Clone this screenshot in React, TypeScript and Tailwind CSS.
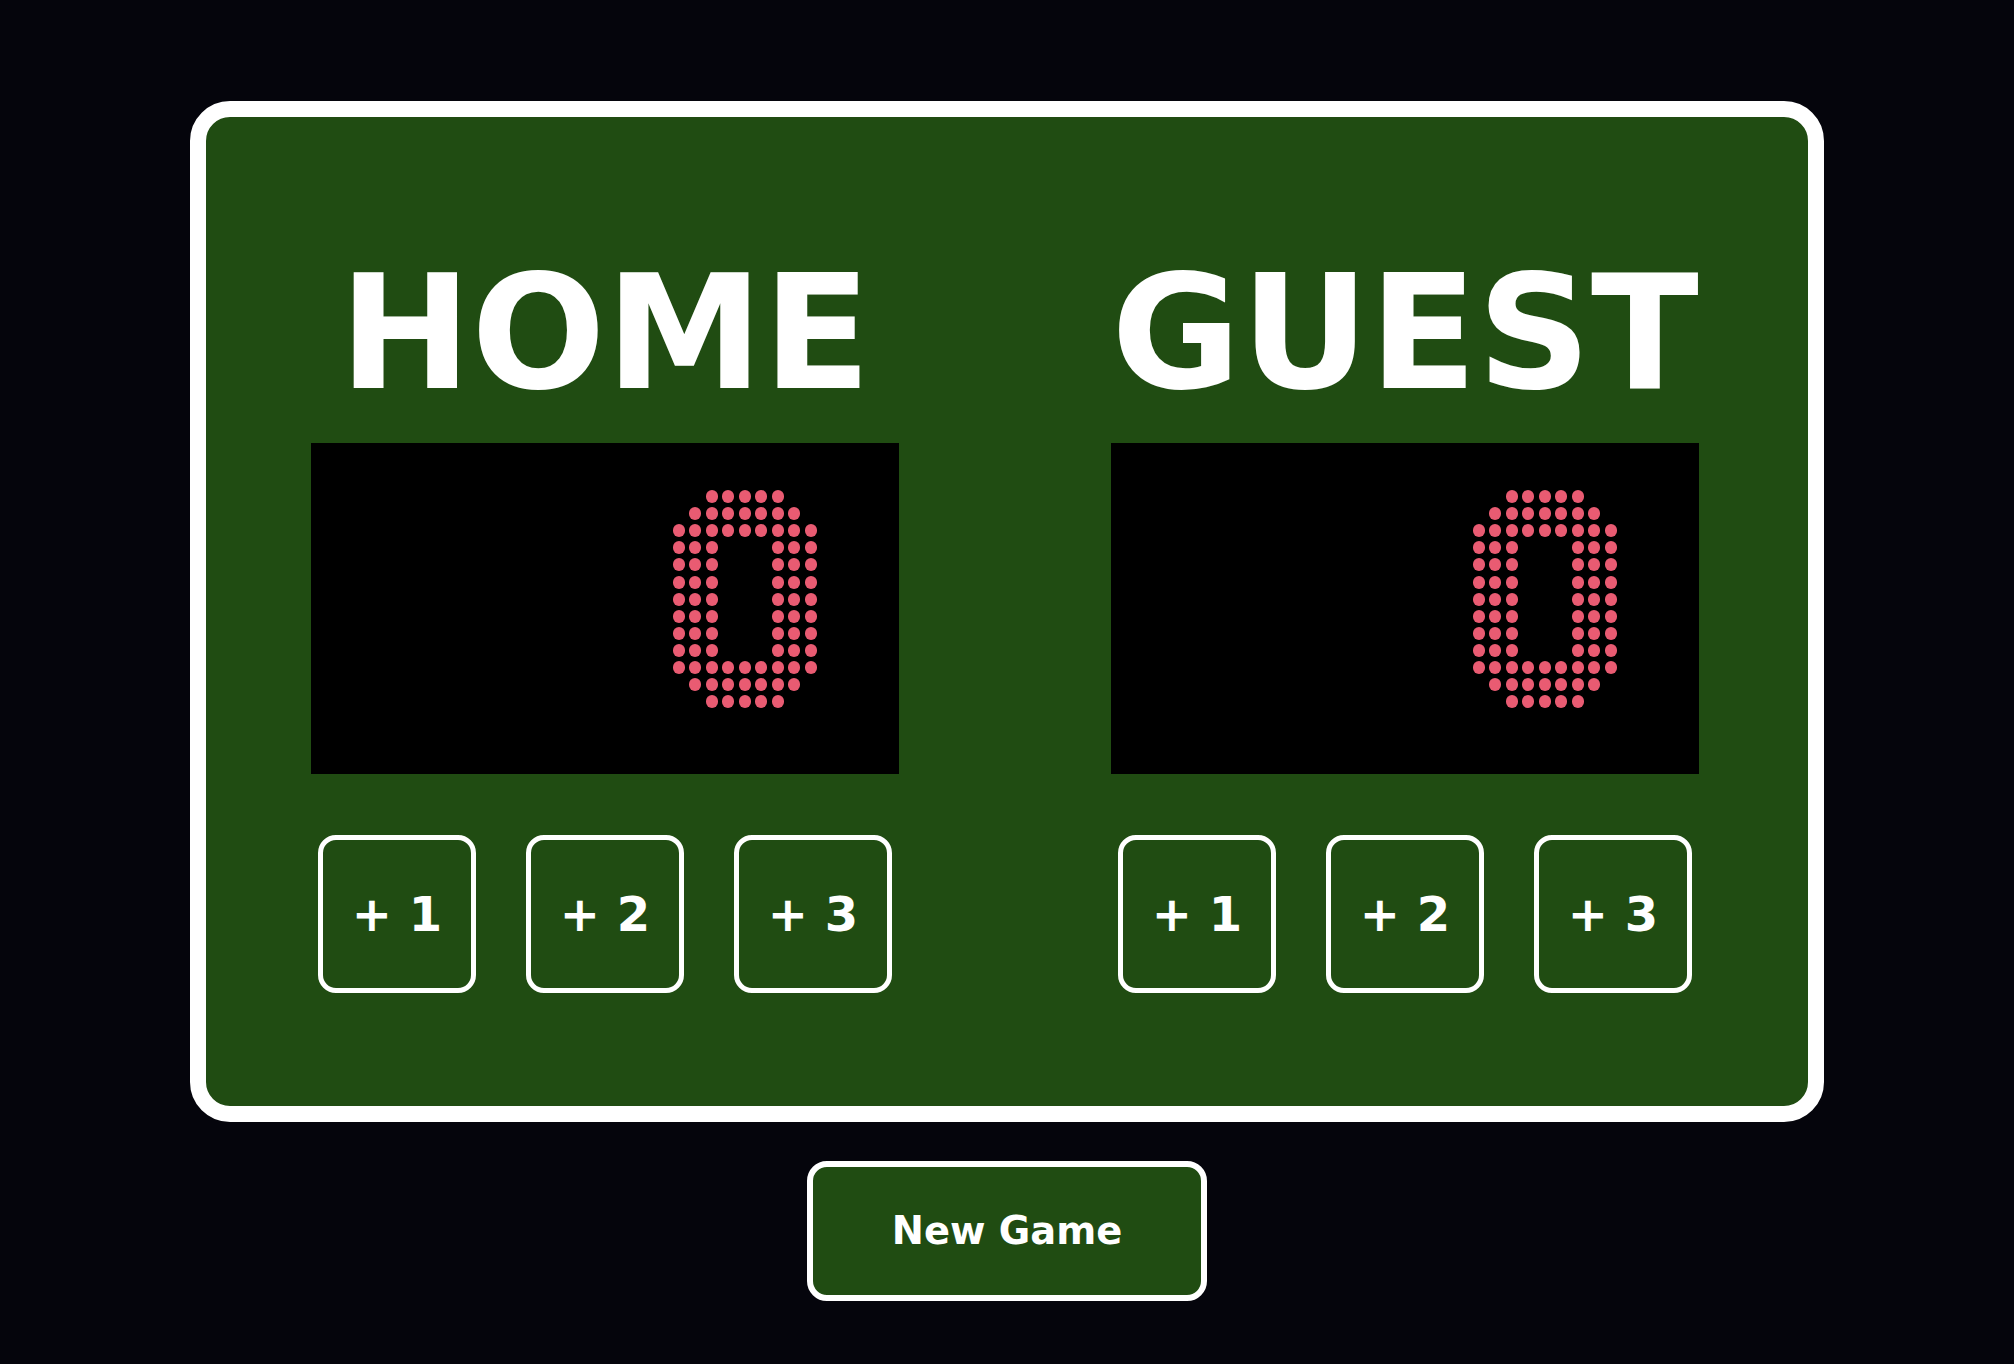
import React, { useState } from "react";

const digitPatterns: Record<string, string[]> = {
  "0": [
    "..#####..",
    ".#######.",
    "#########",
    "###...###",
    "###...###",
    "###...###",
    "###...###",
    "###...###",
    "###...###",
    "###...###",
    "#########",
    ".#######.",
    "..#####..",
  ],
};

function LedDigit({ digit }: { digit: string }) {
  const rows = digitPatterns[digit] ?? digitPatterns["0"];
  return (
    <div className="relative">
      <div
        aria-hidden="true"
        className="grid grid-cols-[repeat(9,16.5px)] grid-rows-[repeat(13,17.1px)]"
      >
        {rows.flatMap((row, r) =>
          row.split("").map((c, i) => (
            <div key={`${r}-${i}`} className="flex items-center justify-center">
              {c === "#" && <div className="w-[12px] h-[13px] rounded-full bg-[#e95b72]" />}
            </div>
          ))
        )}
      </div>
      {/* the real digit, kept as text under the LED dots */}
      <span className="absolute inset-0 flex items-center justify-center text-[190px] leading-[222px] font-bold text-transparent select-none">
        {digit}
      </span>
    </div>
  );
}

function Team({ name, score, onAdd }: { name: string; score: number; onAdd: (n: number) => void }) {
  return (
    <div className="flex flex-col items-center">
      <h2 className="w-full text-center text-[158px] leading-[190px] font-bold text-white whitespace-nowrap mb-[15px]">
        {name}
      </h2>

      {/* Score display */}
      <div className="w-full h-[331px] bg-black flex justify-end items-start pr-[80px] pt-[45px]">
        <div className="flex">
          {String(score)
            .split("")
            .map((d, i) => (
              <LedDigit key={i} digit={d} />
            ))}
        </div>
      </div>

      <div className="flex justify-center gap-[50px] mt-[61px]">
        {[1, 2, 3].map((n) => (
          <button
            key={n}
            onClick={() => onAdd(n)}
            className="w-[158px] h-[158px] border-[5px] border-white rounded-[18px] text-white text-[48px] leading-none font-bold flex items-center justify-center"
          >
            + {n}
          </button>
        ))}
      </div>
    </div>
  );
}

export default function App() {
  const [home, setHome] = useState(0);
  const [guest, setGuest] = useState(0);

  return (
    <div className="min-h-screen w-full bg-[#05050c] flex flex-col items-center pt-[101px] [font-family:'DejaVu_Sans',Verdana,sans-serif]">
      {/* Scoreboard */}
      <div className="w-[1634px] border-[16px] border-white rounded-[40px] bg-[#204c12] grid grid-cols-[588px_588px] gap-x-[212px] px-[105px] pt-[121px] pb-[113px]">
        <Team name="HOME" score={home} onAdd={(n) => setHome(home + n)} />
        <Team name="GUEST" score={guest} onAdd={(n) => setGuest(guest + n)} />
      </div>

      <button
        onClick={() => {
          setHome(0);
          setGuest(0);
        }}
        className="mt-[39px] w-[400px] h-[140px] border-[6px] border-white rounded-[20px] bg-[#204c12] text-white text-[38.4px] leading-none font-bold"
      >
        New Game
      </button>
    </div>
  );
}
